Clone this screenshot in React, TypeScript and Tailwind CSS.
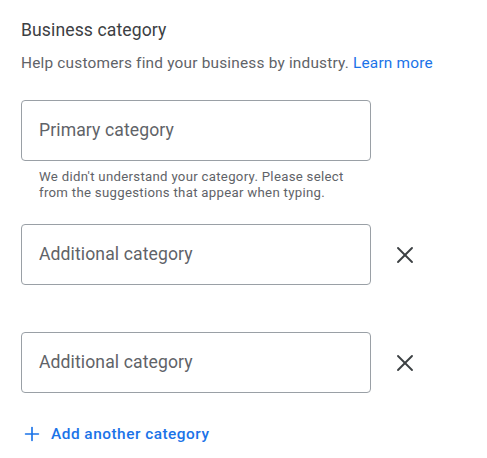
import { X, Plus } from 'lucide-react'

function CategoryField({ label, removable }: { label: string; removable?: boolean }) {
  return (
    <div className="flex items-center">
      <div className="w-[350px] h-[61px] border border-[#9aa0a6] rounded-[4px] flex items-center pl-[17px]">
        <span className="text-[17.6px] text-[#5f6368] tracking-[0.1px]">{label}</span>
      </div>
      {removable && (
        <button className="ml-[20px] w-7 h-7 flex items-center justify-center text-[#3c4043]">
          <X size={28} strokeWidth={1.6} />
        </button>
      )}
    </div>
  )
}

export default function App() {
  return (
    <div className="bg-white w-[487px] h-[458px] pl-[21px] pt-[18px] font-['Roboto','Liberation_Sans',sans-serif]">
      <h2 className="text-[17.6px] leading-6 text-[#3c4043] tracking-[0.1px]">Business category</h2>
      <p className="mt-[11px] text-[15.4px] leading-5 text-[#5f6368] tracking-[0.2px]">
        Help customers find your business by industry.{' '}
        <a className="text-[#1a73e8]">Learn more</a>
      </p>

      <div className="mt-[27px]">
        <CategoryField label="Primary category" />
        <p className="mt-[8px] pl-[18px] w-[345px] text-[13.2px] leading-4 text-[#5f6368] tracking-[0.3px]">
          We didn't understand your category. Please select from the suggestions that appear when typing.
        </p>
      </div>

      <div className="mt-[23px]">
        <CategoryField label="Additional category" removable />
      </div>

      <div className="mt-[47px]">
        <CategoryField label="Additional category" removable />
      </div>

      <button className="mt-[30px] flex items-center gap-[8px] text-[#1a73e8] text-[15.4px] leading-5 font-medium tracking-[0.5px]">
        <Plus size={22} strokeWidth={1.8} />
        <span>Add another category</span>
      </button>
    </div>
  )
}
